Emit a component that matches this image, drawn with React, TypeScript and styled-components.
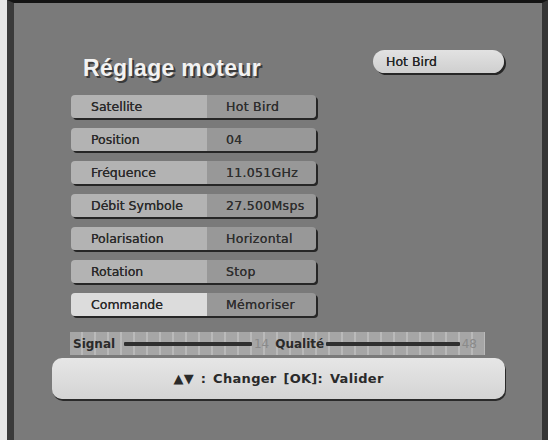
import styled, { createGlobalStyle } from "styled-components";

const Global = createGlobalStyle`
    html, body {
        margin: 0;
        padding: 0;
        background: #e6e6e6;
    }
    body {
        font-family: "DejaVu Sans", "Liberation Sans", sans-serif;
    }
`;

const Frame = styled.div`
    width: 541px;
    height: 440px;
    margin-left: 7px;
    box-sizing: border-box;
    border-left: 7px solid #3a3a3a;
    border-right: 6px solid #353535;
    border-top: 3px solid #141414;
    background: #7a7a7a;
    display: flex;
    flex-direction: column;
`;

const Header = styled.div`
    margin: 47px 0 0 69px;
    width: 421px;
    height: 32px;
    display: flex;
    justify-content: space-between;
    align-items: flex-start;
`;

const Title = styled.h1`
    margin: 4px 0 0 0;
    font-family: "Liberation Sans", Arial, sans-serif;
    font-size: 23px;
    line-height: 28px;
    font-weight: 700;
    letter-spacing: 0.3px;
    color: #f2f2f2;
    text-shadow: 2px 2px 0 #3a3a3a;
`;

const Pill = styled.div`
    width: 131px;
    height: 23px;
    box-sizing: border-box;
    padding-left: 13px;
    border-radius: 12px;
    background: linear-gradient(#e2e2e2, #cfcfcf);
    box-shadow: 2px 2px 0 #262626;
    display: flex;
    align-items: center;
    font-size: 12.5px;
    color: #262626;
    text-shadow: 0 0 0.6px #262626;
`;

const Table = styled.div`
    margin: 13px 0 0 57px;
    display: flex;
    flex-direction: column;
    gap: 10px;
`;

const Row = styled.div`
    width: 245px;
    height: 23px;
    display: flex;
    border-radius: 4px;
    overflow: hidden;
    box-shadow: 2px 2px 0 #262626;
`;

const Label = styled.div<{ $active?: boolean }>`
    width: 136px;
    box-sizing: border-box;
    padding-left: 20px;
    display: flex;
    align-items: center;
    background: ${(p) => (p.$active ? "#dcdcdc" : "#b3b3b3")};
    font-size: 12.5px;
    color: #2a2a2a;
    text-shadow: 0 0 0.6px #2a2a2a;
`;

const Value = styled.div`
    flex: 1;
    box-sizing: border-box;
    padding-left: 19px;
    display: flex;
    align-items: center;
    background: #989898;
    font-size: 12.5px;
    letter-spacing: 0.3px;
    color: #2e2e2e;
    text-shadow: 0 0 0.6px #2e2e2e;
`;

const SignalBar = styled.div`
    margin: 16px 0 0 56px;
    width: 415px;
    height: 23px;
    box-sizing: border-box;
    padding: 0 2px 0 3px;
    display: flex;
    align-items: center;
    background-color: #a6a6a6;
    background-image: repeating-linear-gradient(
        90deg,
        transparent 0 11px,
        rgba(255, 255, 255, 0.22) 11px 13px
    );
`;

const BarLabel = styled.span`
    font-size: 12px;
    font-weight: 700;
    color: #2a2a2a;
`;

const Meter = styled.div<{ $w: number }>`
    width: ${(p) => p.$w}px;
    height: 4px;
    margin: 0 2px;
    background: #2f2f2f;
    border-radius: 1px;
`;

const Level = styled.span`
    font-size: 12px;
    color: #8a8a8a;
    margin-right: 6px;
`;

const HelpBar = styled.div`
    margin: 3px 0 0 38px;
    width: 453px;
    height: 41px;
    border-radius: 10px;
    background: linear-gradient(#e6e6e6, #d4d4d4);
    box-shadow: 1px 2px 0 #2a2a2a;
    display: flex;
    align-items: center;
    justify-content: center;
    font-size: 13px;
    font-weight: 700;
    letter-spacing: 0.3px;
    word-spacing: 2px;
    color: #2a2a2a;
`;

const rows = [
    ["Satellite", "Hot Bird"],
    ["Position", "04"],
    ["Fréquence", "11.051GHz"],
    ["Débit Symbole", "27.500Msps"],
    ["Polarisation", "Horizontal"],
    ["Rotation", "Stop"],
    ["Commande", "Mémoriser"],
];

function App() {
    return (
        <>
            <Global />
            <Frame>
                <Header>
                    <Title>Réglage moteur</Title>
                    <Pill>Hot Bird</Pill>
                </Header>
                <Table>
                    {rows.map(([label, value], i) => (
                        <Row key={label}>
                            <Label $active={i === rows.length - 1}>{label}</Label>
                            <Value>{value}</Value>
                        </Row>
                    ))}
                </Table>
                <SignalBar>
                    <BarLabel>Signal</BarLabel>
                    <Meter $w={133} style={{ marginLeft: 9 }} />
                    <Level>14</Level>
                    <BarLabel>Qualité</BarLabel>
                    <Meter $w={139} />
                    <Level>48</Level>
                </SignalBar>
                <HelpBar>▲▼ : Changer [OK]: Valider</HelpBar>
            </Frame>
        </>
    );
}

export default App;
